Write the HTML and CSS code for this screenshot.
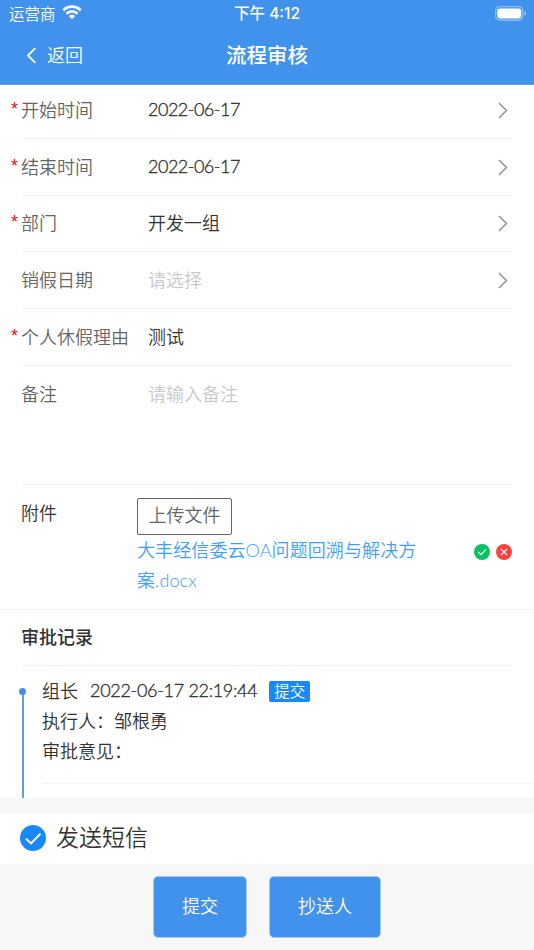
FILE: index.html
```
<!DOCTYPE html>
<html lang="zh-CN">
  <head>
    <meta charset="utf-8">
    <title>流程审核</title>
    <link rel="stylesheet" href="styles.css">
  </head>
  <body>
    <div class="header">
      <div class="status">
        <div class="carrier">
          <span>运营商</span>
          <svg class="wifi" width="20" height="15" viewBox="0 0 20 15" fill="none" stroke="#fff" stroke-width="2.7">
            <path d="M1.3 5.4C6.2 .4 13.8 .4 18.7 5.4"/>
            <path d="M4.5 8.7C7.6 5.6 12.4 5.6 15.5 8.7"/>
            <path d="M10 14.3L6.9 11.2C8.6 9.4 11.4 9.4 13.1 11.2Z" fill="#fff" stroke="none"/>
          </svg>
        </div>
        <div class="clock">下午 4:12</div>
        <svg class="battery" width="32" height="15" viewBox="0 0 32 15">
          <rect x=".7" y=".7" width="27.2" height="13.4" rx="4" fill="none" stroke="#fff" stroke-opacity=".5" stroke-width="1.1"/>
          <rect x="2.3" y="2.4" width="24" height="10" rx="2.4" fill="#fff"/>
          <path d="M29.4 5.2C31.6 6 31.6 8.8 29.4 9.6Z" fill="#fff" fill-opacity=".5"/>
        </svg>
      </div>
      <div class="nav">
        <a class="back" href="#">
          <svg width="11" height="17" viewBox="0 0 11 17" fill="none" stroke="#fff" stroke-width="1.8"><path d="M9.3 1.2L2 8.5L9.3 15.8"/></svg>
          <span>返回</span>
        </a>
        <div class="title">流程审核</div>
      </div>
    </div>

    <!-- 表单 -->
    <div class="form">
      <div class="cell required">
        <div class="label">开始时间</div>
        <div class="value num">2022-06-17</div>
        <svg class="arrow" viewBox="0 0 10 17"><path d="M1 1L8.4 8.5L1 16"/></svg>
      </div>
      <div class="cell required">
        <div class="label">结束时间</div>
        <div class="value num">2022-06-17</div>
        <svg class="arrow" viewBox="0 0 10 17"><path d="M1 1L8.4 8.5L1 16"/></svg>
      </div>
      <div class="cell required">
        <div class="label">部门</div>
        <div class="value">开发一组</div>
        <svg class="arrow" viewBox="0 0 10 17"><path d="M1 1L8.4 8.5L1 16"/></svg>
      </div>
      <div class="cell">
        <div class="label">销假日期</div>
        <div class="value empty">请选择</div>
        <svg class="arrow" viewBox="0 0 10 17"><path d="M1 1L8.4 8.5L1 16"/></svg>
      </div>
      <div class="cell required">
        <div class="label">个人休假理由</div>
        <div class="value">测试</div>
      </div>
      <div class="cell remark">
        <div class="label">备注</div>
        <div class="value empty">请输入备注</div>
      </div>
    </div>

    <!-- 附件 -->
    <div class="attach">
      <div class="attachLabel">附件</div>
      <div class="files">
        <button class="upload">上传文件</button>
        <div class="file">
          <a class="fileName" href="#">大丰经信委云OA问题回溯与解决方案.docx</a>
          <svg class="icon" viewBox="0 0 16 16"><circle cx="8" cy="8" r="8" fill="#07c160"/><path d="M4.2 8L7 10.6L12 5.6" fill="none" stroke="#fff" stroke-width="1.2"/></svg>
          <svg class="icon" viewBox="0 0 16 16"><circle cx="8" cy="8" r="8" fill="#fa4444"/><path d="M5 5L11 11M11 5L5 11" fill="none" stroke="#fff" stroke-width="1.1"/></svg>
        </div>
      </div>
    </div>

    <!-- 审批记录 -->
    <div class="records">
      <div class="recordsTitle">审批记录</div>
      <div class="step">
        <div class="line"></div>
        <div class="stepBody">
          <div class="stepHead"><span>组长</span><span class="num time">2022-06-17 22:19:44</span><span class="tag">提交</span></div>
          <div>执行人：邹根勇</div>
          <div>审批意见：</div>
        </div>
      </div>
    </div>

    <div class="sms">
      <svg width="26" height="26" viewBox="0 0 26 26"><circle cx="13" cy="13" r="13" fill="#1989fa"/><path d="M6 13.7L11 18.4L20.5 8.6" fill="none" stroke="#fff" stroke-width="2"/></svg>
      <span>发送短信</span>
    </div>

    <div class="buttons">
      <button class="btn">提交</button>
      <button class="btn wide">抄送人</button>
    </div>
  </body>
</html>
```
FILE: styles.css
```
* {
  box-sizing: border-box;
}
body {
  margin: 0;
  height: 950px;
  overflow: hidden;
  background: #f7f7f7;
  color: #323233;
  font-family: "Noto Sans CJK SC", sans-serif;
  font-weight: 350;
  font-size: 18px;
  line-height: 30px;
}
a {
  text-decoration: none;
}
button {
  margin: 0;
  padding: 0;
  font: inherit;
}
svg {
  display: block;
  flex: none;
}
.num {
  font-family: Lato, sans-serif;
  font-weight: 300;
  letter-spacing: -0.5px;
  -webkit-text-stroke: 0.35px #323233;
}

/* 顶部 */
.header {
  position: relative;
  height: 85px;
  background: #4192ec;
  border-bottom: 1px solid #60a4ef;
  color: #fff;
}
.status {
  display: grid;
  grid-template-columns: 1fr auto 1fr;
  align-items: center;
  height: 27px;
  padding: 0 7px 0 9px;
  font-size: 15.5px;
  line-height: 27px;
}
.carrier {
  display: flex;
  align-items: center;
  gap: 6px;
}
.wifi {
  margin-top: -2px;
}
.clock {
  margin-right: 2px;
  font-family: Inter, "Noto Sans CJK SC", sans-serif;
  font-size: 15.5px;
  font-weight: 500;
}
.battery {
  justify-self: end;
}
.nav {
  display: grid;
  grid-template-columns: 1fr auto 1fr;
  align-items: center;
  height: 56px;
}
.back {
  display: flex;
  align-items: center;
  gap: 10px;
  padding-left: 26px;
  color: #fff;
}
.back span,
.title {
  margin-top: -2px;
}
.title {
  font-size: 20.5px;
  font-weight: 500;
}

/* 表单 */
.form {
  margin-top: -3px;
  background: #fff;
}
.cell {
  display: flex;
  align-items: center;
  position: relative;
  height: 56.75px;
  margin: 0 22px 0 21px;
  padding-bottom: 2px;
  border-bottom: 1px solid #f3f3f4;
}
.required::before {
  content: "*";
  position: absolute;
  left: -10px;
  color: #ee0a24;
  font-family: "Liberation Sans", sans-serif;
}
.label {
  width: 127px;
  color: #646566;
}
.value {
  flex: 1;
}
.empty {
  color: #c8c9cc;
}
.arrow {
  width: 10px;
  height: 17px;
  margin: 3px 4px 0 0;
  fill: none;
  stroke: #969799;
  stroke-width: 1.6;
}
.form .remark {
  align-items: flex-start;
  height: 119px;
  padding-top: 12px;
}

/* 附件 */
.attach {
  display: flex;
  height: 125px;
  padding: 13px 22px 0 21px;
  background: #fff;
  border-bottom: 1px solid #f5f5f6;
}
.attachLabel {
  width: 116px;
  margin-top: -1px;
}
.files {
  flex: 1;
}
.upload {
  display: block;
  width: 95px;
  height: 37px;
  padding-bottom: 4px;
  border: 1px solid #646566;
  border-radius: 2px;
  background: #fff;
  color: #646566;
}
.file {
  display: flex;
}
.fileName {
  width: 284px;
  margin-right: 53px;
  color: #409eff;
  font-family: Lato, "Noto Sans CJK SC", sans-serif;
  line-height: 30.5px;
  letter-spacing: 0.1px;
}
.icon {
  width: 16px;
  height: 16px;
  margin: 9px 6px 0 0;
}
.icon:last-child {
  margin-right: 0;
}

/* 审批记录 */
.records {
  height: 188px;
  overflow: hidden;
  background: #fff;
}
.recordsTitle {
  height: 56px;
  margin: 0 22px 0 21px;
  padding-top: 11px;
  border-bottom: 1px solid #f3f3f4;
  font-weight: 500;
}
.step {
  display: flex;
}
.line {
  position: relative;
  width: 2px;
  height: 107px;
  margin: 25px 18px 0 22px;
  background: #5b9ff0;
}
.line::before {
  content: "";
  position: absolute;
  left: -3px;
  top: -3px;
  width: 7px;
  height: 7px;
  border-radius: 50%;
  background: #4192ec;
}
.stepBody {
  flex: 1;
  height: 118px;
  padding-top: 9px;
  border-bottom: 1px solid #f3f3f4;
}
.stepHead {
  display: flex;
  align-items: center;
}
.time {
  margin: 0 12px;
  letter-spacing: -0.3px;
}
.tag {
  width: 41px;
  height: 21px;
  margin-top: 4px;
  border-radius: 2px;
  background: #1989fa;
  color: #fff;
  font-size: 15.5px;
  line-height: 18px;
  text-align: center;
}

/* 底部 */
.sms {
  display: flex;
  align-items: center;
  gap: 10px;
  height: 51px;
  margin-top: 15px;
  padding-left: 20px;
  background: #fff;
  font-size: 23px;
}
.sms span {
  margin-top: -4px;
}
.buttons {
  display: flex;
  justify-content: center;
  gap: 22px;
  padding-top: 12px;
}
.btn {
  width: 94px;
  height: 62px;
  padding-bottom: 4px;
  border: 1px solid #a5c9f3;
  border-radius: 5px;
  background: #4192ec;
  color: #fff;
}
.wide {
  width: 112px;
}
```
